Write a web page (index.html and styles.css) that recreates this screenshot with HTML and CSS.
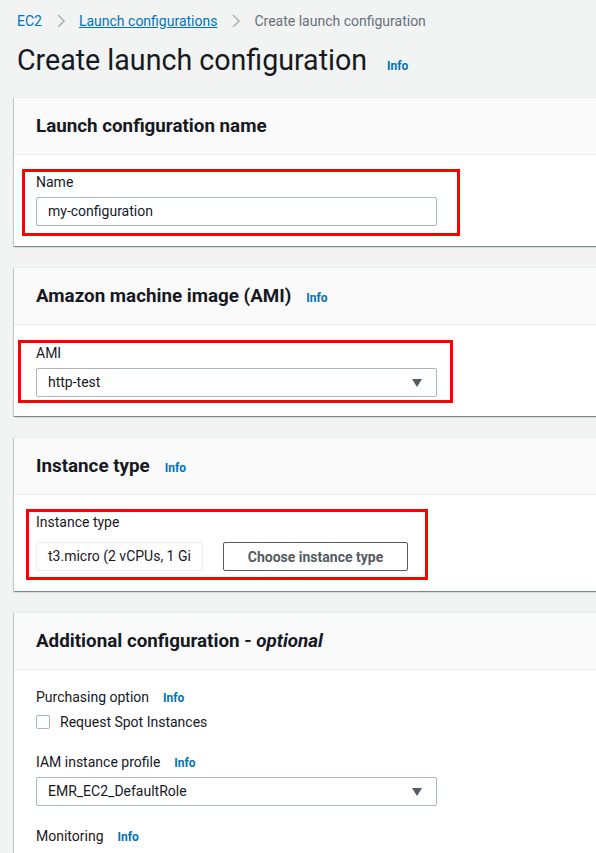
FILE: index.html
```html
<!DOCTYPE html>
<html lang="en">
<head>
<meta charset="utf-8">
<title>Create launch configuration</title>
<link rel="stylesheet" href="styles.css">
</head>
<body>
<div class="page">
  <nav class="crumbs">
    <a class="crumb-link">EC2</a>
    <svg class="chev" viewBox="0 0 8 14" width="8" height="14"><path d="M1 1l6 6-6 6"/></svg>
    <a class="crumb-link under">Launch configurations</a>
    <svg class="chev" viewBox="0 0 8 14" width="8" height="14"><path d="M1 1l6 6-6 6"/></svg>
    <span class="crumb-current">Create launch configuration</span>
  </nav>
  <h1 class="title"><span>Create launch configuration</span><a class="info">Info</a></h1>

  <section class="card">
    <div class="card-header"><h2 class="card-title"><span>Launch configuration name</span></h2></div>
    <div class="card-body">
      <div class="mark mark-name">
        <div class="label">Name</div>
        <div class="field">my-configuration</div>
      </div>
    </div>
  </section>

  <section class="card">
    <div class="card-header"><h2 class="card-title"><span>Amazon machine image (AMI)</span><a class="info">Info</a></h2></div>
    <div class="card-body">
      <div class="mark mark-ami">
        <div class="label">AMI</div>
        <div class="field select"><span>http-test</span><svg class="caret" viewBox="0 0 10 8" width="10" height="8"><path d="M0 0h10L5 8z"/></svg></div>
      </div>
    </div>
  </section>

  <section class="card">
    <div class="card-header"><h2 class="card-title"><span>Instance type</span><a class="info">Info</a></h2></div>
    <div class="card-body">
      <div class="mark mark-type">
        <div class="label">Instance type</div>
        <div class="type-row">
          <div class="field readonly">t3.micro (2 vCPUs, 1 Gi</div>
          <button class="btn">Choose instance type</button>
        </div>
      </div>
    </div>
  </section>

  <section class="card">
    <div class="card-header"><h2 class="card-title"><span>Additional configuration - <em>optional</em></span></h2></div>
    <div class="card-body body-extra">
      <div class="label label-first"><span>Purchasing option</span><a class="info">Info</a></div>
      <label class="check-row"><span class="checkbox"></span><span>Request Spot Instances</span></label>
      <div class="label label-gap"><span>IAM instance profile</span><a class="info">Info</a></div>
      <div class="field select field-iam"><span>EMR_EC2_DefaultRole</span><svg class="caret" viewBox="0 0 10 8" width="10" height="8"><path d="M0 0h10L5 8z"/></svg></div>
      <div class="label label-gap"><span>Monitoring</span><a class="info">Info</a></div>
    </div>
  </section>
</div>
</body>
</html>
```

FILE: styles.css
```css
html, body { margin: 0; }
html { overflow-x: hidden; }
body {
  background: #f2f3f3;
  font-family: Roboto, "Liberation Sans", sans-serif;
  font-size: 14px;
  line-height: 20px;
  color: #16191f;
}
.page { padding: 11px 0 0 14px; }

.crumbs {
  display: flex;
  align-items: center;
  height: 20px;
  padding-left: 3px;
}
.crumb-link { color: #0073bb; text-decoration: none; }
.crumb-link.under { text-decoration: underline; }
.crumb-current { color: #687078; }
.chev { margin: 0 14px 0 15px; }
.chev path { fill: none; stroke: #aab7b8; stroke-width: 1.6; }

.title {
  display: flex;
  align-items: baseline;
  gap: 20px;
  margin: 11px 0 0;
  padding-left: 3px;
  font-size: 28.6px;
  line-height: 36px;
  font-weight: 400;
}
.info {
  color: #0073bb;
  font-size: 12px;
  font-weight: 700;
  line-height: 16px;
}

.card {
  background: #fff;
  margin: 19px -10px 21px 0;
  border-top: 1px solid #eaeded;
  box-shadow: 0 1px 1px 0 rgba(0, 28, 36, .3), 1px 1px 1px 0 rgba(0, 28, 36, .15), -1px 1px 1px 0 rgba(0, 28, 36, .15);
}
.card-header {
  background: #fafafa;
  padding: 18px 22px 18px;
  border-bottom: 1px solid #eaeded;
}
.card-title {
  display: flex;
  align-items: baseline;
  gap: 15px;
  margin: 0;
  font-size: 18.8px;
  line-height: 20px;
  font-weight: 700;
}
.card-title em { font-weight: 700; }
.card-body { display: flow-root; padding: 14px 0 0 22px; }

.mark {
  box-sizing: border-box;
  border: 3px solid #ff0000;
}
.mark-name { width: 438px; margin: 0 0 10px -14px; padding: 0 0 7px 11px; }
.mark-ami { width: 435px; margin: 1px 0 13px -18px; padding: 0 0 3px 15px; }
.mark-type { width: 402px; margin: 0 0 11px -10px; padding: 0 0 6px 7px; }

.label {
  display: flex;
  align-items: baseline;
  gap: 14px;
}
.field {
  box-sizing: border-box;
  width: 401px;
  height: 29px;
  margin-top: 5px;
  padding: 0 14px 0 11px;
  border: 1px solid #aab7b8;
  border-radius: 2px;
  background: #fff;
  line-height: 27px;
  white-space: nowrap;
  overflow: hidden;
}
.select {
  display: flex;
  align-items: center;
  justify-content: space-between;
}
.caret path { fill: #545b64; }

.type-row {
  display: flex;
  gap: 20px;
  margin-top: 10px;
}
.type-row .field { margin-top: 0; }
.readonly {
  width: 167px;
  border-color: #eaeded;
  padding-right: 0;
}
.btn {
  box-sizing: border-box;
  width: 185px;
  height: 29px;
  border: 1px solid #545b64;
  border-radius: 2px;
  background: #fff;
  color: #545b64;
  font-family: inherit;
  font-size: 14px;
  font-weight: 700;
  padding: 0;
}

.body-extra { padding-bottom: 10px; }
.label-first { margin-top: 3px; }
.label-gap { margin-top: 20px; }
.check-row {
  display: flex;
  align-items: center;
  gap: 10px;
  margin-top: 5px;
}
.checkbox {
  box-sizing: border-box;
  width: 14px;
  height: 14px;
  border: 1px solid #aab7b8;
  border-radius: 2px;
  background: #fff;
}
.field-iam { margin-top: 5px; }
```
